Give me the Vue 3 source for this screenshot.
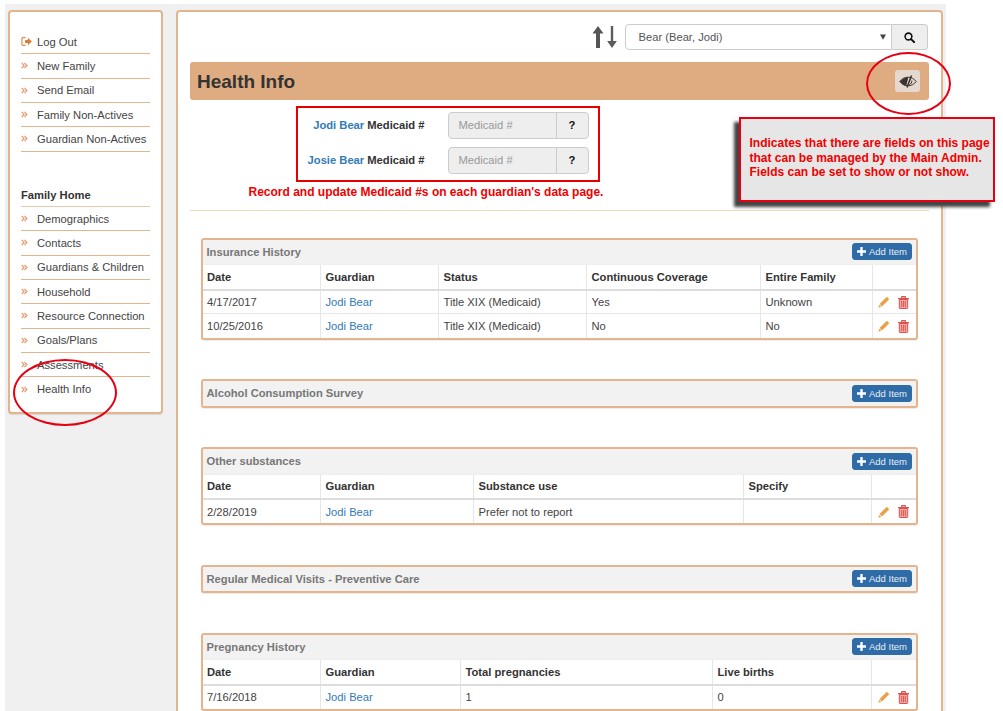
<script setup>
const topLinks = ['New Family', 'Send Email', 'Family Non-Actives', 'Guardian Non-Actives']
const homeLinks = ['Demographics', 'Contacts', 'Guardians & Children', 'Household', 'Resource Connection', 'Goals/Plans', 'Assessments', 'Health Info']
const panels = [
  {
    title: 'Insurance History',
    cols: [118, 118, 148, 174, 111.5],
    head: ['Date', 'Guardian', 'Status', 'Continuous Coverage', 'Entire Family'],
    rows: [
      ['4/17/2017', 'Jodi Bear', 'Title XIX (Medicaid)', 'Yes', 'Unknown'],
      ['10/25/2016', 'Jodi Bear', 'Title XIX (Medicaid)', 'No', 'No']
    ]
  },
  { title: 'Alcohol Consumption Survey', cols: [], head: [], rows: [] },
  {
    title: 'Other substances',
    cols: [118, 153, 270, 128],
    head: ['Date', 'Guardian', 'Substance use', 'Specify'],
    rows: [['2/28/2019', 'Jodi Bear', 'Prefer not to report', '']]
  },
  { title: 'Regular Medical Visits - Preventive Care', cols: [], head: [], rows: [] },
  {
    title: 'Pregnancy History',
    cols: [118, 140, 252, 159],
    head: ['Date', 'Guardian', 'Total pregnancies', 'Live births'],
    rows: [['7/16/2018', 'Jodi Bear', '1', '0']]
  }
]
const guardians = ['Jodi Bear', 'Josie Bear']
</script>

<template>
  <div class="page">
    <aside class="side">
      <nav class="nav first">
        <a class="item">
          <svg class="ic" viewBox="0 0 12 12" width="11" height="11"><path d="M5 1.800H2.200C1.500 1.800 1 2.300 1 3v6c0 .7.500 1.200 1.200 1.200H5" fill="none" stroke="#e08a4a" stroke-width="1.300"/><path d="M4.500 4.300h3V2l4.300 4-4.300 4V7.700h-3z" fill="#dc7a30"/></svg>
          Log Out
        </a>
        <a v-for="l in topLinks" :key="l" class="item">
          <svg class="ic chev" viewBox="0 0 8 8" width="7" height="7"><path d="M.8 1 3.600 4 .8 7M4 1 6.800 4 4 7" fill="none" stroke="#e69468" stroke-width="1.300"/></svg>
          {{ l }}
        </a>
      </nav>
      <div class="nav-title">Family Home</div>
      <nav class="nav">
        <a v-for="l in homeLinks" :key="l" class="item">
          <svg class="ic chev" viewBox="0 0 8 8" width="7" height="7"><path d="M.8 1 3.600 4 .8 7M4 1 6.800 4 4 7" fill="none" stroke="#e69468" stroke-width="1.300"/></svg>
          {{ l }}
        </a>
      </nav>
    </aside>

    <main class="main">
      <div class="topbar">
        <svg class="sort" viewBox="0 0 26 22" width="26" height="22">
          <path d="M6 0 11.500 7.500H8V22H4V7.500H.5z" fill="#555"/>
          <path d="M18.800 0h2.400v15h3.700L20 22l-4.900-7h3.700z" fill="#5c5c5c"/>
        </svg>
        <div class="picker">
          <div class="select">
            <span>Bear (Bear, Jodi)</span>
            <svg viewBox="0 0 8 7" width="6" height="6"><path d="M0 0h8L4 7z" fill="#444"/></svg>
          </div>
          <button class="search">
            <svg viewBox="0 0 14 14" width="11" height="11"><circle cx="5.700" cy="5.700" r="4.300" fill="none" stroke="#111" stroke-width="2"/><path d="m9 9 4 4" stroke="#111" stroke-width="2.400" stroke-linecap="round"/></svg>
          </button>
        </div>
      </div>

      <header class="banner">
        <h1>Health Info</h1>
        <button class="eye">
          <svg viewBox="0 0 18 13" width="18" height="13">
            <path d="M.8 6.500C2.800 3.800 5.700 2.200 9 2.200s6.200 1.600 8.200 4.300c-2 2.700-4.900 4.300-8.200 4.300S2.800 9.200.8 6.500z" fill="none" stroke="#3a3330" stroke-width="1"/>
            <path d="M1 6.500C3 4 5.700 2.400 9.300 2.400L7.300 10.700C4.500 10.300 2.600 8.700 1 6.500z" fill="#3a3330"/>
            <path d="M12.500.5 8 12.500" stroke="#3a3330" stroke-width="1.500"/>
            <path d="M12.800 5.500c.3 1.800-.7 3.500-2.500 4.100" fill="none" stroke="#3a3330" stroke-width="1"/>
          </svg>
        </button>
      </header>

      <div class="medicaid-wrap">
        <div class="medicaid">
          <div v-for="g in guardians" :key="g" class="m-row">
            <label><span class="link">{{ g }}</span> Medicaid #</label>
            <div class="m-group">
              <div class="m-input">Medicaid #</div>
              <div class="m-add">?</div>
            </div>
          </div>
        </div>
        <p class="m-note">Record and update Medicaid #s on each guardian's data page.</p>
      </div>
      <hr class="rule" />

      <section v-for="p in panels" :key="p.title" class="panel">
        <div class="p-head">
          <span>{{ p.title }}</span>
          <button class="add">
            <svg viewBox="0 0 10 10" width="9" height="9"><path d="M3.700 0h2.600v3.700H10v2.600H6.300V10H3.700V6.300H0V3.700h3.700z" fill="#fff"/></svg>
            Add Item
          </button>
        </div>
        <table v-if="p.head.length">
          <colgroup>
            <col v-for="(c, i) in p.cols" :key="i" :style="{ width: c + 'px' }" />
            <col />
          </colgroup>
          <thead>
            <tr>
              <th v-for="h in p.head" :key="h">{{ h }}</th>
              <th></th>
            </tr>
          </thead>
          <tbody>
            <tr v-for="(r, ri) in p.rows" :key="ri">
              <td v-for="(v, i) in r" :key="i" :class="{ link: i === 1 }">{{ v }}</td>
              <td class="acts">
                <svg viewBox="0 0 13 13" width="12" height="12"><path d="M9.600.8 12.200 3.400 4.300 11.300 1.700 8.700z" fill="#ee9f45"/><path d="M1.300 9.500 3.500 11.700.4 12.600z" fill="#ee9f45"/></svg>
                <svg viewBox="0 0 11 13" width="11" height="13"><path d="M3.500.5h4v1.500h-4z" fill="none" stroke="#d9534f" stroke-width="1"/><path d="M0 2h11v1.200H0z" fill="#d9534f"/><path d="M1.300 3.500h8.400v8.300c0 .4-.3.700-.7.700H2c-.4 0-.7-.3-.7-.7z" fill="#eda8a2" stroke="#d9534f" stroke-width="1"/><path d="M3.700 5v6M5.500 5v6M7.300 5v6" stroke="#d9534f" stroke-width=".9"/></svg>
              </td>
            </tr>
          </tbody>
        </table>
      </section>
    </main>

    <div class="ring ring-eye"></div>
    <div class="ring ring-nav"></div>
    <div class="callout">
      Indicates that there are fields on this page that can be managed by the Main Admin. Fields can be set to show or not show.
    </div>
  </div>
</template>

<style>
html, body { margin: 0; background: #fff; overflow: hidden; }
</style>

<style scoped>
.page {
  position: relative;
  box-sizing: border-box;
  width: 941px;
  height: 707px;
  margin: 4px 0 0 5px;
  padding: 6px 3px 0 2.500px;
  background: #f0f0f0;
  display: flex;
  align-items: flex-start;
  gap: 12.500px;
  font-family: "Liberation Sans", Arial, sans-serif;
  font-size: 11.200px;
  color: #333;
}
.side {
  box-sizing: border-box;
  flex: 0 0 155.500px;
  height: 404px;
  padding: 18px 11.500px 0 11.500px;
  background: #fff;
  border: 2px solid #e6b48c;
  border-radius: 4px;
  box-shadow: 0 1px 1px rgba(0,0,0,.1);
}
.nav.first { margin-bottom: 31px; }
.item {
  box-sizing: border-box;
  height: 24.330px;
  display: flex;
  align-items: center;
  border-bottom: 1px solid #e3b48e;
  color: #444;
  white-space: nowrap;
}
.nav:not(.first) .item:last-child { border-bottom: 0; }
.ic { flex: 0 0 auto; margin-right: 5px; }
.chev { margin-right: 9px; }
.nav-title {
  box-sizing: border-box;
  height: 24.330px;
  padding-top: 1px;
  display: flex;
  align-items: center;
  font-weight: 700;
  border-bottom: 1px solid #e8c9ab;
  color: #333;
}
.main {
  box-sizing: border-box;
  flex: 0 0 767.500px;
  height: 701px;
  overflow: hidden;
  padding: 12px 12px 0 12px;
  background: #fff;
  border: 2px solid #e6b48c;
  border-bottom: 0;
  border-radius: 4px 4px 0 0;
}
.topbar {
  display: flex;
  justify-content: flex-end;
  align-items: center;
  height: 26px;
  padding-right: 1px;
}
.sort { margin-right: 7px; }
.picker { display: flex; width: 303px; height: 26px; }
.select {
  flex: 1;
  display: flex;
  align-items: center;
  justify-content: space-between;
  padding: 0 5px 0 12.500px;
  background: #fff;
  border: 1px solid #ccc;
  border-radius: 4px 0 0 4px;
  color: #555;
}
.search {
  width: 36px;
  padding: 0;
  background: #eee;
  border: 1px solid #ccc;
  border-left: 0;
  border-radius: 0 4px 4px 0;
  display: flex;
  align-items: center;
  justify-content: center;
}
.banner {
  margin-top: 12px;
  height: 38px;
  box-sizing: border-box;
  display: flex;
  align-items: center;
  justify-content: space-between;
  padding: 0 9px 0 7.500px;
  background: #deac80;
  border-radius: 3px;
}
.banner h1 {
  margin: 0;
  font-size: 19px;
  line-height: 1;
  font-weight: 700;
  color: #333;
}
.eye {
  width: 25px;
  height: 22px;
  padding: 0;
  background: #e5d9cf;
  border: 0;
  border-radius: 3px;
  display: flex;
  align-items: center;
  justify-content: center;
}
.medicaid-wrap {
  display: flex;
  flex-direction: column;
  align-items: flex-start;
  margin-top: 6px;
}
.medicaid {
  box-sizing: border-box;
  width: 304px;
  height: 76px;
  margin-left: 106px;
  padding: 4px 9px 0 0;
  border: 2px solid #e60000;
  display: flex;
  flex-direction: column;
  gap: 8px;
}
.m-row { display: flex; align-items: center; justify-content: flex-end; height: 27px; }
.m-row label { font-weight: 700; color: #333; margin-right: 23px; padding-bottom: 1px; }
.m-group {
  display: flex;
  width: 141px;
  height: 27px;
  box-sizing: border-box;
  border: 1px solid #ccc;
  border-radius: 4px;
  background: #eee;
}
.m-input {
  flex: 1;
  display: flex;
  align-items: center;
  padding: 0 0 1px 10px;
  color: #999;
  border-right: 1px solid #ccc;
}
.m-add {
  width: 31px;
  display: flex;
  align-items: center;
  justify-content: center;
  padding-bottom: 1px;
  font-weight: 700;
  color: #111;
}
.m-note {
  margin: 2px 0 0 59px;
  font-size: 12px;
  line-height: 16px;
  font-weight: 700;
  color: #f00000;
  white-space: nowrap;
}
.rule {
  margin: 10px 0 0;
  border: 0;
  border-top: 1px solid #f0d9bf;
}
.link { color: #337ab7; }
.panel {
  box-sizing: border-box;
  margin: 26.500px 11px 39.500px 11px;
  border: 2px solid #e6b48c;
  border-radius: 3px;
  background: #fff;
  box-shadow: 0 1px 1px rgba(0,0,0,.08);
  overflow: hidden;
}
.panel + .panel { margin-top: 0; }
.p-head {
  box-sizing: border-box;
  height: 24.500px;
  display: flex;
  align-items: center;
  justify-content: space-between;
  padding: 0 4px;
  background: #f2f2f2;
  font-weight: 700;
  color: #777;
}
.add {
  box-sizing: border-box;
  height: 17px;
  width: 60px;
  padding: 0;
  display: flex;
  align-items: center;
  justify-content: center;
  gap: 3px;
  background: #2f6ba6;
  border: 1px solid #2e6da4;
  border-radius: 3px;
  color: #e8eef5;
  font: 9.500px "Liberation Sans", Arial, sans-serif;
}
table {
  width: 100%;
  table-layout: fixed;
  border-collapse: collapse;
}
th, td {
  box-sizing: border-box;
  padding: 0 4.500px;
  text-align: left;
  border-left: 1px solid #e6e6e6;
  overflow: hidden;
  white-space: nowrap;
}
th:first-child, td:first-child { border-left: 0; }
th { height: 25px; font-weight: 700; border-bottom: 2px solid #ddd; border-top: 1px solid #eee; color: #333; }
td { height: 24px; border-bottom: 1px solid #e6e6e6; color: #444; }
tbody tr:last-child td { border-bottom: 0; }
td.link { color: #337ab7; }
.acts svg { vertical-align: middle; }
.acts svg:first-child { margin: 0 8px 0 1px; }
.ring {
  position: absolute;
  box-sizing: border-box;
  border: 2px solid #e60012;
  border-radius: 50%;
}
.ring-eye { left: 861px; top: 48px; width: 85px; height: 63px; }
.ring-nav { left: 8px; top: 355px; width: 104px; height: 67px; }
.callout {
  position: absolute;
  box-sizing: border-box;
  left: 734px;
  top: 113px;
  width: 256px;
  height: 85px;
  padding: 17px 0 0 8.500px;
  background: #e6e6e6;
  border: 2px solid #e60012;
  box-shadow: -5px 5px 3px #444;
  color: #f00000;
  font-size: 12px;
  font-weight: 700;
  line-height: 14.500px;
}
</style>
